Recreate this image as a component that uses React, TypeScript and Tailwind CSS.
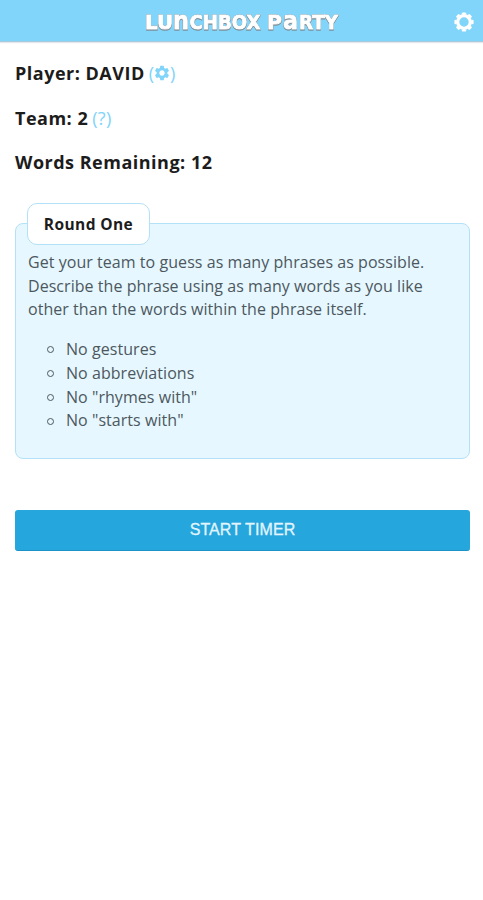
import { MdSettings } from "react-icons/md";

const rules = [
  "No gestures",
  "No abbreviations",
  'No "rhymes with"',
  'No "starts with"',
];

const teeth = [0, 45, 90, 135, 180, 225, 270, 315];

function Logo() {
  return (
    <svg
      width="200"
      height="28"
      viewBox="0 0 200 28"
      className="overflow-visible [filter:drop-shadow(0_0_0.6px_#4d5960)_drop-shadow(0_1px_0.5px_#7d929d)]"
      role="img"
      aria-label="Lunchbox Party"
    >
      <g
        fill="#fff"
        stroke="#fff"
        strokeWidth="0.9"
        className="font-['DejaVu_Sans',sans-serif] text-[19px] font-bold"
      >
        <text x="4" y="21.5" textLength="28" lengthAdjust="spacingAndGlyphs">LU</text>
        <text x="32" y="21.5" textLength="16" lengthAdjust="spacingAndGlyphs" className="text-[24px]">n</text>
        <text x="48.5" y="21.5" textLength="71" lengthAdjust="spacingAndGlyphs">CHBOX</text>
        <text x="126" y="21.5" textLength="15" lengthAdjust="spacingAndGlyphs">P</text>
        <text x="142" y="21.5" textLength="15" lengthAdjust="spacingAndGlyphs" className="text-[24px]">a</text>
        <text x="158" y="21.5" textLength="39" lengthAdjust="spacingAndGlyphs">RTY</text>
      </g>
    </svg>
  );
}

function Gear() {
  return (
    <svg width="20" height="20" viewBox="0 0 20 20" fill="none" stroke="currentColor">
      <circle cx="10" cy="10" r="6.3" strokeWidth="3.2" />
      {teeth.map((angle) => (
        <path
          key={angle}
          d="M9 1.6h2"
          strokeWidth="2.4"
          strokeLinecap="round"
          transform={`rotate(${angle} 10 10)`}
        />
      ))}
    </svg>
  );
}

export default function App() {
  return (
    <div className="min-h-screen bg-white font-['Open_Sans',sans-serif] text-[#1c1c1c]">
      {/* header */}
      <header className="relative flex h-[42px] items-center justify-center border-b border-[#a9c9dc] bg-[#81d4fa] pr-0.5 shadow-[0_1px_1px_#e4e8ee]">
        <Logo />
        <button className="absolute top-[12px] right-[9px] text-white" aria-label="Settings">
          <Gear />
        </button>
      </header>

      <main className="pt-[19px] pr-[13px] pl-[15px]">
        {/* player info */}
        <div className="space-y-[20.5px] text-[18px] leading-6 font-bold tracking-[0.5px]">
          <p className="flex items-center">
            Player: DAVID
            <span className="ml-[4px] flex items-center font-normal tracking-normal text-[#81d4fa]">
              (<MdSettings className="-mx-px size-[18px]" />)
            </span>
          </p>
          <p>
            Team: 2<span className="ml-[4px] font-normal tracking-[0.3px] text-[#81d4fa]">(?)</span>
          </p>
          <p>Words Remaining: 12</p>
        </div>

        {/* round card */}
        <section className="mt-[49px] h-[236px] rounded-lg border border-[#b3e1f7] bg-[#e6f7ff] px-3 text-[16px] leading-[23.7px] tracking-[0.05px] text-[#4d585e]">
          <h2 className="-mt-[21px] -ml-px flex h-[42px] w-[123px] items-center justify-center rounded-[10px] border border-[#b3e1f7] bg-white pt-px text-[15.5px] font-bold tracking-[0.4px] text-[#1c1c1c]">
            Round One
          </h2>
          <p className="mt-[6px] whitespace-nowrap">
            Get your team to guess as many phrases as possible.
            <br />
            Describe the phrase using as many words as you like
            <br />
            other than the words within the phrase itself.
          </p>
          <ul className="mt-4 pl-[19px]">
            {rules.map((rule) => (
              <li key={rule} className="flex items-center">
                <span className="mr-[12px] size-[7px] rounded-full border border-[#4d585e]" />
                {rule}
              </li>
            ))}
          </ul>
        </section>

        <button className="mt-[51px] h-[41px] w-full rounded-[3px] border-b border-[#1c93c6] bg-[#25a6dc] pb-px font-['Liberation_Sans',sans-serif] text-[16px] tracking-[0.1px] text-[#e2f5fd] [-webkit-text-stroke:0.3px_#e2f5fd]">
          START TIMER
        </button>
      </main>
    </div>
  );
}
